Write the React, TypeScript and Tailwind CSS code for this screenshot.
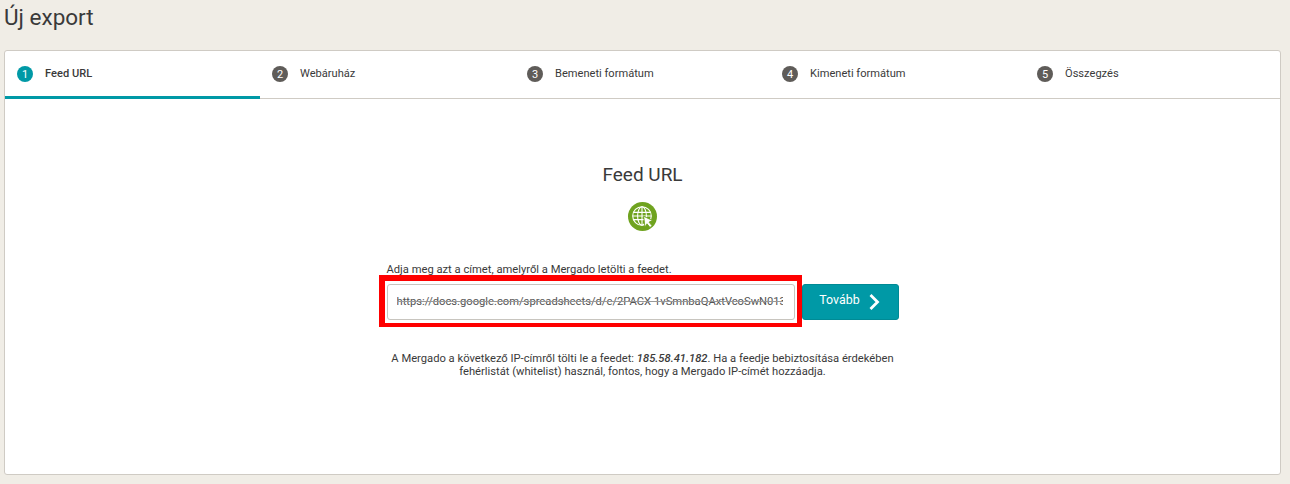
import React from "react";

const steps = ["Feed URL", "Webáruház", "Bemeneti formátum", "Kimeneti formátum", "Összegzés"];

function GlobeIcon() {
  return (
    <svg width="29" height="29" viewBox="0 0 29 29" className="block">
      <circle cx="14.5" cy="14.5" r="14.5" fill="#6fa31f" />
      <g fill="none" stroke="#fff" strokeWidth="1.1">
        <circle cx="14" cy="14" r="9.3" />
        <ellipse cx="14" cy="14" rx="4.4" ry="9.3" />
        <path d="M14 4.7v18.6M5.4 10.4h17.2M4.8 14h18.4M5.4 17.6h17.2" />
      </g>
      <path d="M15.6 14.2l9 4.4-3.6 1.5 3.1 3.7-2.1 1.7-3-3.7-2 3.3z" fill="#fff" stroke="#6fa31f" strokeWidth="0.9" />
    </svg>
  );
}

export default function App() {
  return (
    <div className="h-[484px] overflow-hidden bg-[#f0ede6] pl-1 pr-[9px] font-['Roboto',sans-serif] text-[#3a3a3a]">
      <h1 className="h-[50px] pt-[1px] text-[22.5px] leading-[32px] font-normal">Új export</h1>
      <div className="h-[425px] rounded-[3px] border border-[#cfcbc4] bg-white">
        <div className="flex h-[48px] border-b border-[#cfcbc4]">
          {steps.map((step, i) => (
            <div
              key={step}
              className={`flex h-[48px] w-[255.2px] items-start gap-[12px] pl-[12px] pt-[15px] ${
                i === 0 ? "border-b-[3px] border-[#0099a6]" : ""
              }`}
            >
              <span
                className={`flex h-4 w-4 items-center justify-center rounded-full text-[11px] leading-none text-white ${
                  i === 0 ? "bg-[#0099a6]" : "bg-[#5f5c59]"
                }`}
              >
                {i + 1}
              </span>
              <span className={`text-[11.1px] leading-4 ${i === 0 ? "font-medium" : ""}`}>{step}</span>
            </div>
          ))}
        </div>

        <div className="flex flex-col items-center">
          <h2 className="mt-[64px] text-[19px] leading-[24px] font-normal">Feed URL</h2>
          <div className="mt-[15px]">
            <GlobeIcon />
          </div>
          <div className="mt-[32px] w-[512px]">
            <p className="text-[11.2px] leading-[13px]">Adja meg azt a címet, amelyről a Mergado letölti a feedet.</p>
            <div className="relative mt-[8px] flex h-[36px]">
              <div className="flex h-[36px] w-[408px] items-center overflow-hidden rounded-[3px] border border-[#c8c5bf] bg-white px-[9px]">
                <span className="w-[386px] overflow-hidden text-[11.2px] whitespace-nowrap text-[#555] line-through decoration-[#999]">
                  https://docs.google.com/spreadsheets/d/e/2PACX-1vSmnbaQAxtVcoSwN013
                </span>
              </div>
              <div className="pointer-events-none absolute top-[-9px] left-[-8px] h-[52px] w-[423px] border-t-[6px] border-r-[5px] border-b-[4px] border-l-[6px] border-[#ff0000]" />
              <button className="ml-[7px] flex h-[36px] w-[97px] items-center justify-center gap-[8px] rounded-[3px] border border-[#008a95] bg-[#0099a6] text-[12.4px] text-white">
                <span className="pb-[3px]">Tovább</span>
                <svg width="13" height="18" viewBox="0 0 13 18" fill="none" stroke="#fff" strokeWidth="2.8">
                  <path d="M2.5 2l7 7-7 7" />
                </svg>
              </button>
            </div>
            <p className="mt-[32px] text-center text-[11.2px] leading-[13px]">
              A Mergado a következő IP-címről tölti le a feedet: <b className="font-medium italic">185.58.41.182</b>. Ha a feedje bebiztosítása érdekében
              <br />
              fehérlistát (whitelist) használ, fontos, hogy a Mergado IP-címét hozzáadja.
            </p>
          </div>
        </div>
      </div>
    </div>
  );
}
